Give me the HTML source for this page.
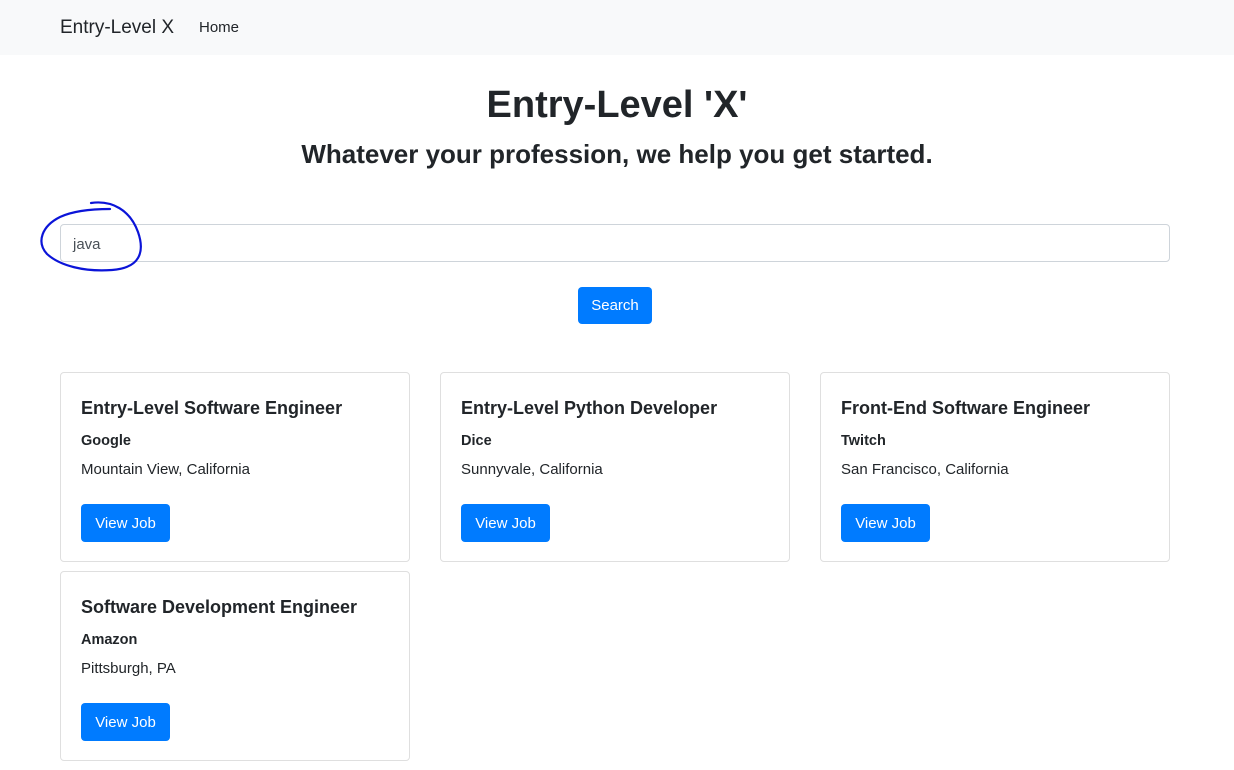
<!DOCTYPE html>
<html><head><meta charset="utf-8"><style>
*{box-sizing:border-box;margin:0;padding:0}
body{width:1234px;height:770px;overflow:hidden;background:#fff;font-family:"Liberation Sans",sans-serif;color:#212529;position:relative}
.nav{height:55px;background:#f8f9fa;position:relative}
.brand{position:absolute;left:60px;top:17px;font-size:19px;color:#212529}
.home{position:absolute;left:199px;top:19px;font-size:15px;color:#212529}
h1{position:absolute;top:84px;left:0;width:1234px;text-align:center;font-size:38px;font-weight:bold}
h2{position:absolute;top:139px;left:0;width:1234px;text-align:center;font-size:26px;font-weight:bold}
.inp{position:absolute;left:60px;top:224px;width:1110px;height:38px;border:1px solid #ced4da;border-radius:4px;padding:11px 12px;font-size:15px;color:#495057}
.btn{background:#007bff;color:#fff;border-radius:4px;font-size:15px;text-align:center;position:absolute}
.card{position:absolute;width:350px;height:190px;border:1px solid #dfdfdf;border-radius:4px}
.card .t{position:absolute;left:20px;top:25px;font-size:18px;font-weight:bold;white-space:nowrap}
.card .c{position:absolute;left:20px;top:60px;font-size:14.5px;font-weight:bold}
.card .l{position:absolute;left:20px;top:88px;font-size:15px}
.card .btn{left:20px;top:131px;width:89px;height:38px;line-height:39px}
</style></head><body>
<div class="nav"><span class="brand">Entry-Level X</span><span class="home">Home</span></div>
<h1>Entry-Level 'X'</h1>
<h2>Whatever your profession, we help you get started.</h2>
<div class="inp">java</div>
<svg style="position:absolute;left:0;top:0" width="200" height="300"><path d="M91,203 C112,200 130,210 138,232 C145,252 140,268 112,270 C85,272 60,266 47,254 C36,242 42,226 60,217 C75,210 95,209 110,209" fill="none" stroke="#0b14d8" stroke-width="2.2" stroke-linecap="round"/></svg>
<div class="btn" style="left:578px;top:287px;width:74px;height:37px;line-height:38px">Search</div>
<div class="card" style="left:60px;top:372px"><div class="t">Entry-Level Software Engineer</div><div class="c">Google</div><div class="l">Mountain View, California</div><div class="btn">View Job</div></div>
<div class="card" style="left:440px;top:372px"><div class="t">Entry-Level Python Developer</div><div class="c">Dice</div><div class="l">Sunnyvale, California</div><div class="btn">View Job</div></div>
<div class="card" style="left:820px;top:372px"><div class="t">Front-End Software Engineer</div><div class="c">Twitch</div><div class="l">San Francisco, California</div><div class="btn">View Job</div></div>
<div class="card" style="left:60px;top:571px"><div class="t">Software Development Engineer</div><div class="c">Amazon</div><div class="l">Pittsburgh, PA</div><div class="btn">View Job</div></div>
</body></html>
